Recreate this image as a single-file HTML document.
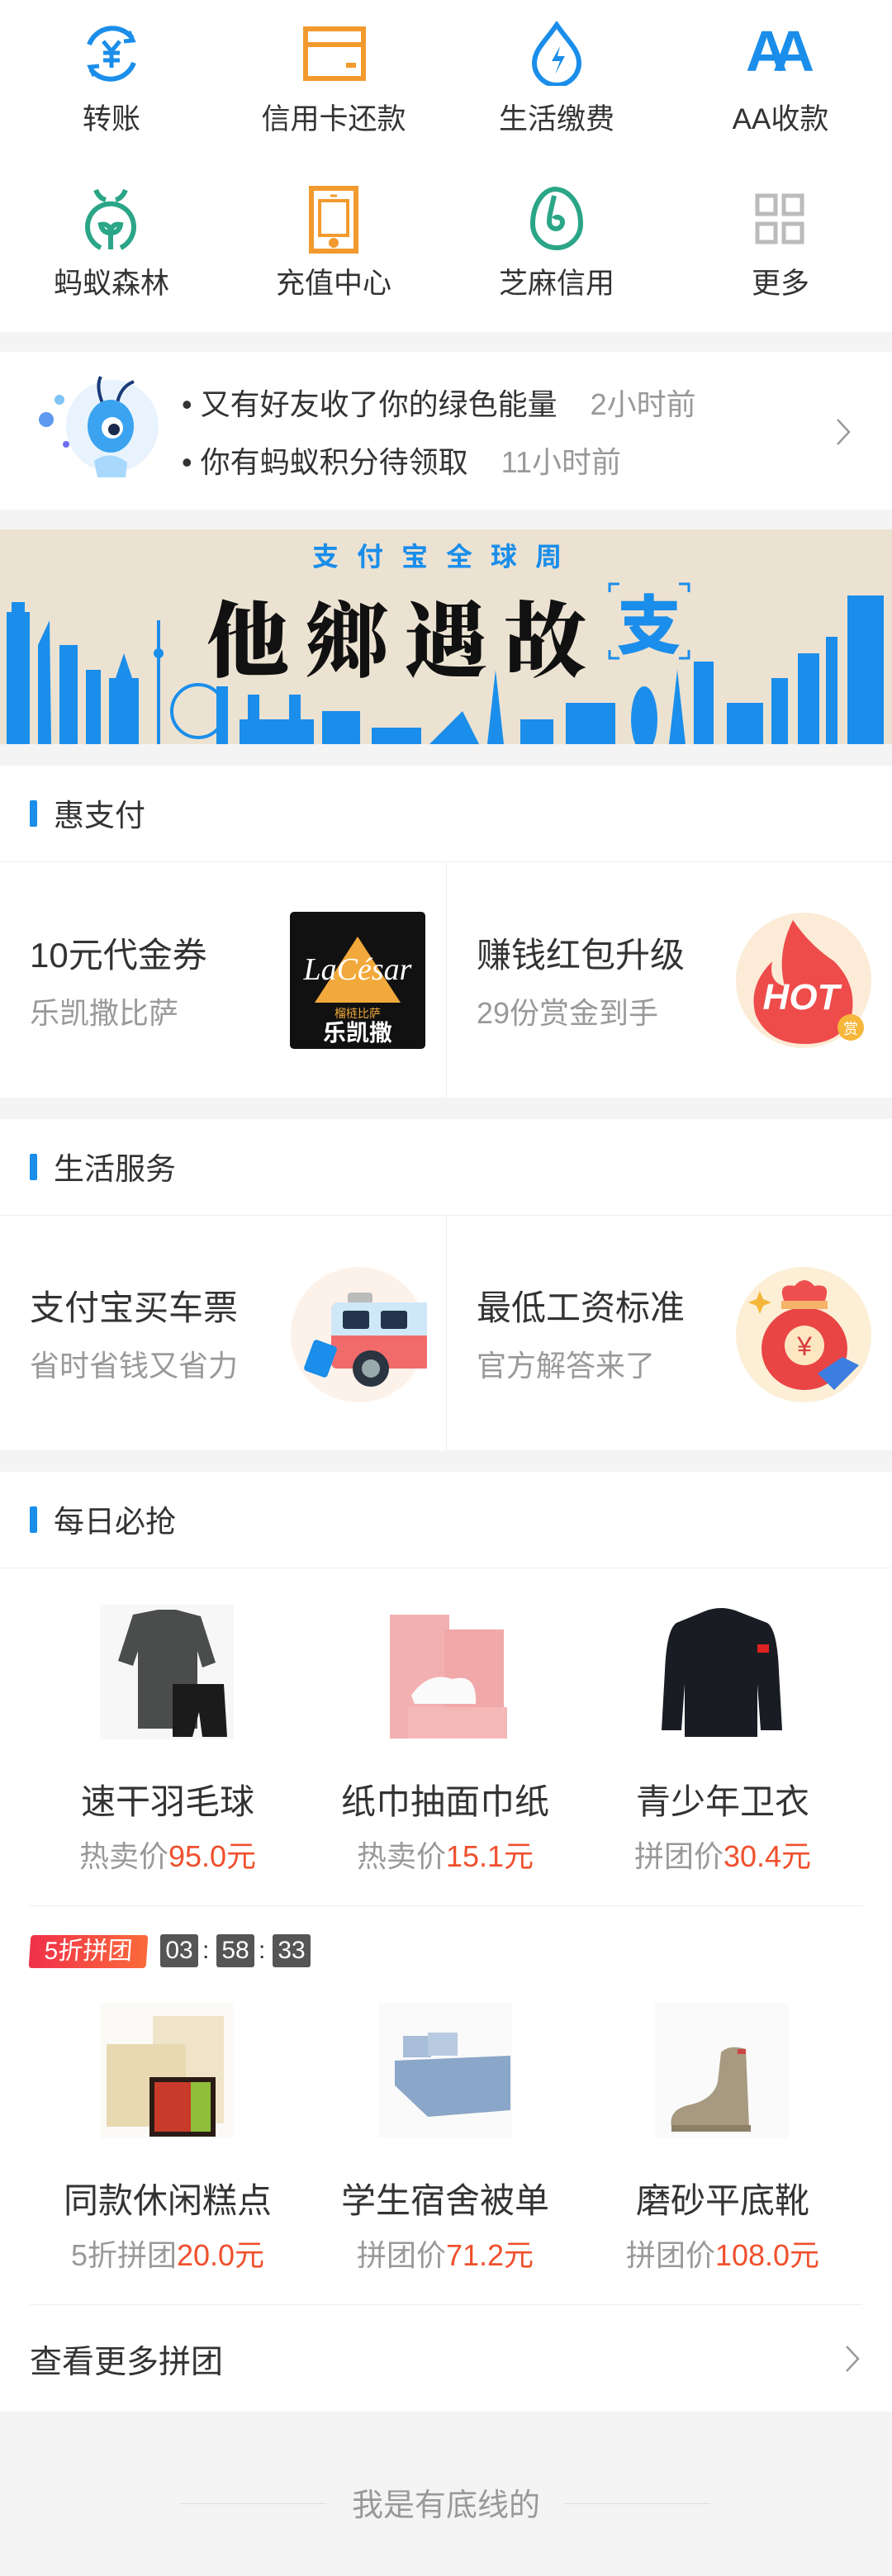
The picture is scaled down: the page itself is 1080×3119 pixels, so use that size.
<!DOCTYPE html>
<html><head><meta charset="utf-8"><style>
*{margin:0;padding:0;box-sizing:border-box}
body{width:1080px;height:3119px;background:#fff;font-family:"Liberation Sans","Noto Sans CJK SC",sans-serif;position:relative;overflow:hidden;color:#333}
.a{position:absolute}
.gray{position:absolute;left:0;width:1080px;background:#f4f4f4}
.lbl{position:absolute;width:270px;text-align:center;font-size:35px;color:#333;line-height:40px;margin-top:4px}
.ic{position:absolute}
.hd{position:absolute;left:0;width:1080px;height:117px;border-bottom:1px solid #eee}
.hd i{position:absolute;left:36px;top:42px;width:9px;height:32px;background:#1a8eea;border-radius:2px}
.hd span{position:absolute;left:65px;top:41px;font-size:37px;line-height:40px;color:#333}
.ct{position:absolute;font-size:42px;line-height:46px;color:#333;margin-top:3px}
.cs{position:absolute;font-size:36px;line-height:40px;color:#999;margin-top:3px}
.pn{position:absolute;width:336px;text-align:center;font-size:42px;line-height:46px;color:#333;margin-top:3px}
.pp{position:absolute;width:336px;text-align:center;font-size:36px;line-height:40px;color:#999;margin-top:3px}
.pp b{font-weight:normal;color:#f0502d}
.tb{position:absolute;top:2342px;width:46px;height:40px;background:#555;color:#fff;font-size:30px;line-height:40px;text-align:center;border-radius:3px}
.col{position:absolute;top:2342px;font-size:30px;line-height:40px;color:#333}
</style></head><body>

<svg class="ic" style="left:98px;top:28px" width="74" height="74" viewBox="0 0 74 74" fill="none" stroke="#1a8eea" stroke-width="6">
<path d="M10 26 A30 30 0 0 1 62 18"/><path d="M64 48 A30 30 0 0 1 12 56"/>
<path d="M58 10 L63 21 L52 22" stroke-width="5"/><path d="M16 64 L11 53 L22 52" stroke-width="5"/>
<path d="M27 22 L37 34 L47 22 M37 34 V54 M27 36 H47 M27 45 H47" stroke-width="5"/></svg>
<div class="lbl" style="left:0;top:121px">转账</div>

<svg class="ic" style="left:367px;top:32px" width="76" height="66" viewBox="0 0 76 66" fill="none" stroke="#f29a2e" stroke-width="6">
<rect x="3" y="3" width="70" height="60"/><path d="M3 22 H73"/><rect x="52" y="44" width="12" height="6" fill="#f29a2e" stroke="none"/></svg>
<div class="lbl" style="left:269px;top:121px">信用卡还款</div>

<svg class="ic" style="left:642px;top:26px" width="64" height="78" viewBox="0 0 64 78" fill="none" stroke="#1a8eea" stroke-width="6">
<path d="M32 4 C20 22 5 34 5 50 A27 27 0 0 0 59 50 C59 34 44 22 32 4Z"/><path d="M36 30 L26 48 H36 L30 64 L42 42 H33 Z" fill="#1a8eea" stroke="none"/></svg>
<div class="lbl" style="left:539px;top:121px">生活缴费</div>

<div class="a" style="left:903px;top:26px;font-size:70px;line-height:72px;font-weight:bold;color:#1a8eea;letter-spacing:-18px;font-family:'Liberation Sans',sans-serif">AA</div>
<div class="lbl" style="left:810px;top:121px">AA收款</div>

<svg class="ic" style="left:102px;top:226px" width="64" height="80" viewBox="0 0 64 80" fill="none" stroke="#2aa587" stroke-width="6">
<path d="M14 4 Q18 14 26 16 M50 4 Q46 14 38 16"/><path d="M20 74 A28 28 0 1 1 44 74"/><path d="M32 76 V50 M32 56 Q22 56 20 46 Q30 44 32 54 Q34 44 44 46 Q42 56 32 56"/></svg>
<div class="lbl" style="left:0;top:320px">蚂蚁森林</div>

<svg class="ic" style="left:374px;top:225px" width="60" height="82" viewBox="0 0 60 82" fill="none" stroke="#f29a2e" stroke-width="6">
<rect x="3" y="3" width="54" height="76"/><rect x="13" y="18" width="34" height="42" stroke-width="4"/><circle cx="30" cy="69" r="3" fill="#f29a2e"/><path d="M26 12 H34" stroke-width="3"/></svg>
<div class="lbl" style="left:269px;top:320px">充值中心</div>

<svg class="ic" style="left:641px;top:225px" width="66" height="82" viewBox="0 0 66 82" fill="none" stroke="#2aa587" stroke-width="6">
<path d="M30 4 C14 6 4 26 4 46 A29 29 0 0 0 62 46 C62 22 48 4 30 4Z"/><path d="M30 12 C26 30 24 36 24 44 A8 8 0 0 0 40 44 C40 38 32 36 30 40"/></svg>
<div class="lbl" style="left:539px;top:320px">芝麻信用</div>

<svg class="ic" style="left:914px;top:234px" width="60" height="62" viewBox="0 0 60 62" fill="none" stroke="#bbb" stroke-width="5">
<rect x="3" y="3" width="22" height="22"/><rect x="35" y="3" width="22" height="22"/><rect x="3" y="37" width="22" height="22"/><rect x="35" y="37" width="22" height="22"/></svg>
<div class="lbl" style="left:810px;top:320px">更多</div>

<div class="gray" style="top:402px;height:24px"></div>

<svg class="a" style="left:44px;top:448px" width="150" height="130" viewBox="0 0 150 130">
<circle cx="92" cy="68" r="56" fill="#e8f3fd"/>
<circle cx="12" cy="60" r="9" fill="#5d9af0"/><circle cx="28" cy="36" r="6" fill="#7fc4f5"/><circle cx="36" cy="90" r="4" fill="#6a6ff0"/>
<path d="M80 40 Q72 20 78 8 M98 40 Q102 20 118 14" stroke="#1a3b7a" stroke-width="4" fill="none"/>
<ellipse cx="90" cy="68" rx="28" ry="32" fill="#3ba3f0"/><circle cx="92" cy="70" r="13" fill="#fff"/><circle cx="94" cy="72" r="7" fill="#1a2a4a"/>
<path d="M70 110 Q90 96 110 112 L108 130 H74Z" fill="#a8d8fb"/></svg>
<div class="a" style="left:220px;top:469px;font-size:36px;line-height:42px;color:#333">•&nbsp;又有好友收了你的绿色能量 <span style="color:#999;margin-left:30px">2小时前</span></div>
<div class="a" style="left:220px;top:539px;font-size:36px;line-height:42px;color:#333">•&nbsp;你有蚂蚁积分待领取 <span style="color:#999;margin-left:30px">11小时前</span></div>
<svg class="a" style="left:1011px;top:505px" width="20" height="36" viewBox="0 0 20 36" fill="none" stroke="#999" stroke-width="2.5"><path d="M3 3 L17 18 L3 33"/></svg>

<div class="gray" style="top:617px;height:24px"></div>

<svg class="a" style="left:0;top:641px" width="1080" height="260" viewBox="0 0 1080 260">
<rect width="1080" height="260" fill="#ece2d2"/>
<text x="540" y="44" text-anchor="middle" font-family="Noto Sans CJK SC,sans-serif" font-weight="bold" font-size="32" fill="#1a8eea" letter-spacing="22">支付宝全球周</text>
<text x="250" y="170" font-family="Noto Serif CJK SC,serif" font-weight="900" font-size="100" fill="#111" letter-spacing="20">他鄉遇故</text>
<path d="M738 76 V66 H750 M822 66 H834 V76 M738 146 V156 H750 M822 156 H834 V146" stroke="#1a8eea" stroke-width="3" fill="none"/>
<text x="786" y="144" text-anchor="middle" font-family="Noto Sans CJK SC,sans-serif" font-weight="900" font-size="78" fill="#1a8eea">支</text>
<g fill="#1a8eea">
<rect x="8" y="100" width="28" height="160"/><rect x="14" y="88" width="16" height="14"/>
<polygon points="46,260 46,140 60,110 62,260"/><rect x="72" y="140" width="22" height="120"/><rect x="104" y="170" width="18" height="90"/>
<rect x="132" y="180" width="36" height="80"/><polygon points="140,180 150,150 160,180"/><rect x="190" y="110" width="4" height="150"/><circle cx="192" cy="150" r="6"/>
<circle cx="240" cy="220" r="32" fill="none" stroke="#1a8eea" stroke-width="4"/><rect x="262" y="190" width="14" height="70"/>
<rect x="290" y="230" width="90" height="30"/><rect x="300" y="200" width="14" height="60"/><rect x="350" y="200" width="14" height="60"/>
<rect x="390" y="220" width="46" height="40"/><rect x="450" y="240" width="60" height="20"/><polygon points="520,260 560,220 580,260"/>
<polygon points="590,260 600,170 610,260"/><rect x="630" y="230" width="40" height="30"/><rect x="685" y="210" width="60" height="50"/>
<ellipse cx="780" cy="230" rx="16" ry="40"/><polygon points="810,260 820,170 830,260"/><rect x="840" y="160" width="24" height="100"/>
<rect x="880" y="210" width="44" height="50"/><rect x="934" y="180" width="20" height="80"/><rect x="966" y="150" width="26" height="110"/>
<rect x="1000" y="130" width="14" height="130"/><rect x="1026" y="80" width="44" height="180"/>
</g></svg>

<div class="gray" style="top:901px;height:26px"></div>

<div class="hd" style="top:927px"><i></i><span>惠支付</span></div>
<div class="a" style="left:540px;top:1044px;width:1px;height:285px;background:#eee"></div>
<div class="ct" style="left:36px;top:1131px">10元代金券</div>
<div class="cs" style="left:36px;top:1204px">乐凯撒比萨</div>
<div class="a" style="left:351px;top:1104px;width:164px;height:166px;background:#111;border-radius:5px;overflow:hidden">
<svg width="164" height="166" viewBox="0 0 164 166"><polygon points="82,30 134,110 30,110" fill="#f2a93b"/>
<text x="82" y="82" text-anchor="middle" font-family="Liberation Serif,serif" font-style="italic" font-size="38" fill="#fff">LaCésar</text>
<text x="82" y="128" text-anchor="middle" font-size="14" fill="#f2a93b" font-family="Noto Sans CJK SC,sans-serif">榴梿比萨</text>
<text x="82" y="156" text-anchor="middle" font-size="28" font-weight="bold" fill="#fff" font-family="Noto Sans CJK SC,sans-serif">乐凯撒</text></svg></div>
<div class="ct" style="left:577px;top:1131px">赚钱红包升级</div>
<div class="cs" style="left:577px;top:1204px">29份赏金到手</div>
<svg class="a" style="left:890px;top:1104px" width="166" height="166" viewBox="0 0 166 166">
<circle cx="83" cy="83" r="82" fill="#fcebd6"/>
<path d="M70 10 Q90 40 120 60 Q150 90 140 130 Q125 160 85 160 Q40 160 25 125 Q15 90 45 60 Q40 85 60 90 Q50 50 70 10Z" fill="#ee4b4b"/>
<text x="80" y="118" text-anchor="middle" font-family="Liberation Sans,sans-serif" font-weight="bold" font-style="italic" font-size="44" fill="#fff">HOT</text>
<circle cx="140" cy="140" r="16" fill="#f6b63a"/><text x="140" y="148" text-anchor="middle" font-size="18" fill="#fff" font-family="Noto Sans CJK SC,sans-serif">赏</text></svg>

<div class="gray" style="top:1329px;height:26px"></div>

<div class="hd" style="top:1355px"><i></i><span>生活服务</span></div>
<div class="a" style="left:540px;top:1472px;width:1px;height:284px;background:#eee"></div>
<div class="ct" style="left:36px;top:1558px">支付宝买车票</div>
<div class="cs" style="left:36px;top:1631px">省时省钱又省力</div>
<svg class="a" style="left:351px;top:1533px" width="166" height="166" viewBox="0 0 166 166">
<circle cx="83" cy="83" r="82" fill="#fdf2ea"/>
<rect x="70" y="32" width="30" height="14" rx="4" fill="#bbb"/>
<path d="M60 44 H166 V124 H56 Q50 124 50 114 V54 Q50 44 60 44Z" fill="#f26b6b"/>
<path d="M60 44 H166 V84 H50 V54 Q50 44 60 44Z" fill="#cfe8f8"/>
<rect x="64" y="54" width="32" height="22" rx="3" fill="#23344d"/><rect x="110" y="54" width="32" height="22" rx="3" fill="#23344d"/>
<circle cx="98" cy="124" r="22" fill="#2b3441"/><circle cx="98" cy="124" r="11" fill="#9aa"/>
<rect x="22" y="92" width="30" height="40" rx="4" transform="rotate(20 37 112)" fill="#1a8eea"/></svg>
<div class="ct" style="left:577px;top:1558px">最低工资标准</div>
<div class="cs" style="left:577px;top:1631px">官方解答来了</div>
<svg class="a" style="left:890px;top:1533px" width="166" height="166" viewBox="0 0 166 166">
<circle cx="83" cy="83" r="82" fill="#fcefd6"/>
<path d="M60 44 Q50 20 72 24 Q84 10 96 24 Q118 20 108 44Z" fill="#ee5050"/>
<ellipse cx="84" cy="100" rx="52" ry="50" fill="#e94545"/><rect x="56" y="42" width="56" height="10" fill="#f6b36a"/>
<circle cx="84" cy="96" r="24" fill="#fde7c2"/><text x="84" y="108" text-anchor="middle" font-size="32" fill="#d83c3c" font-family="Liberation Sans,sans-serif">¥</text>
<path d="M100 130 L130 110 L150 120 L120 150Z" fill="#3b7de0"/><polygon points="30,30 34,40 44,44 34,48 30,58 26,48 16,44 26,40" fill="#f6b63a"/></svg>

<div class="gray" style="top:1756px;height:26px"></div>

<div class="hd" style="top:1782px"><i></i><span>每日必抢</span></div>

<svg class="a" style="left:121px;top:1943px" width="162" height="163" viewBox="0 0 162 163">
<rect width="162" height="163" fill="#f7f7f7"/><path d="M40 12 L70 6 H92 L122 14 L140 70 L124 76 L118 56 V150 H46 V56 L40 74 L22 68Z" fill="#4a4d4c"/>
<path d="M88 96 H150 L154 160 H124 L120 130 L112 160 H88Z" fill="#1b1b1b"/></svg>
<svg class="a" style="left:458px;top:1943px" width="162" height="163" viewBox="0 0 162 163">
<rect width="162" height="163" fill="#fff"/><rect x="14" y="12" width="72" height="150" fill="#f2b1b0"/><rect x="80" y="30" width="72" height="132" fill="#f0a8a8"/>
<rect x="36" y="124" width="120" height="38" fill="#f4b8b6"/><path d="M40 110 Q60 80 90 90 Q120 82 118 120 H44Z" fill="#fafafa"/></svg>
<svg class="a" style="left:793px;top:1943px" width="162" height="163" viewBox="0 0 162 163">
<rect width="162" height="163" fill="#fff"/><path d="M60 8 Q80 0 100 8 L136 22 Q148 30 150 80 L154 152 H128 L124 96 V160 H36 V96 L32 152 H8 L12 80 Q14 30 26 22Z" fill="#1a1c24"/>
<rect x="124" y="48" width="14" height="10" fill="#d22"/></svg>

<div class="pn" style="left:35px;top:2156px">速干羽毛球</div>
<div class="pp" style="left:35px;top:2225px">热卖价<b>95.0元</b></div>
<div class="pn" style="left:371px;top:2156px">纸巾抽面巾纸</div>
<div class="pp" style="left:371px;top:2225px">热卖价<b>15.1元</b></div>
<div class="pn" style="left:707px;top:2156px">青少年卫衣</div>
<div class="pp" style="left:707px;top:2225px">拼团价<b>30.4元</b></div>

<div class="a" style="left:36px;top:2307px;width:1008px;height:1px;background:#eee"></div>

<div class="a" style="left:36px;top:2343px;width:142px;height:40px;background:linear-gradient(90deg,#f0304a,#fb6a3a);color:#fff;font-size:30px;line-height:40px;text-align:center;border-radius:4px;transform:skewX(-4deg)">5折拼团</div>
<div class="tb" style="left:194px">03</div><div class="col" style="left:245px">:</div>
<div class="tb" style="left:262px">58</div><div class="col" style="left:313px">:</div>
<div class="tb" style="left:330px">33</div>

<svg class="a" style="left:121px;top:2425px" width="162" height="164" viewBox="0 0 162 164">
<rect width="162" height="164" fill="#fbfaf6"/><rect x="64" y="16" width="86" height="130" fill="#efe4c8"/><rect x="8" y="50" width="96" height="100" fill="#e8d9b3"/>
<rect x="60" y="90" width="80" height="72" fill="#2a1b14"/><rect x="66" y="96" width="68" height="60" fill="#c83a2a"/><rect x="110" y="96" width="24" height="60" fill="#8fbf3a"/></svg>
<svg class="a" style="left:458px;top:2425px" width="162" height="164" viewBox="0 0 162 164">
<rect width="162" height="164" fill="#fafafa"/><path d="M20 70 L160 64 V130 L60 138 L20 100Z" fill="#8aa6c8"/><rect x="30" y="40" width="34" height="26" fill="#a7bdd8"/><rect x="60" y="36" width="36" height="28" fill="#b8cae0"/></svg>
<svg class="a" style="left:793px;top:2425px" width="162" height="164" viewBox="0 0 162 164">
<rect width="162" height="164" fill="#fafafa"/><path d="M80 60 Q90 50 110 56 L114 150 H20 Q16 130 40 124 Q70 118 76 96Z" fill="#a89a80"/><rect x="20" y="148" width="96" height="8" fill="#8c7f66"/><rect x="100" y="56" width="10" height="6" fill="#c44"/></svg>

<div class="pn" style="left:35px;top:2639px">同款休闲糕点</div>
<div class="pp" style="left:35px;top:2708px">5折拼团<b>20.0元</b></div>
<div class="pn" style="left:371px;top:2639px">学生宿舍被单</div>
<div class="pp" style="left:371px;top:2708px">拼团价<b>71.2元</b></div>
<div class="pn" style="left:707px;top:2639px">磨砂平底靴</div>
<div class="pp" style="left:707px;top:2708px">拼团价<b>108.0元</b></div>

<div class="a" style="left:36px;top:2790px;width:1008px;height:1px;background:#eee"></div>
<div class="a" style="left:36px;top:2840px;font-size:39px;line-height:42px;color:#333">查看更多拼团</div>
<svg class="a" style="left:1022px;top:2838px" width="20" height="36" viewBox="0 0 20 36" fill="none" stroke="#999" stroke-width="2.5"><path d="M3 3 L17 18 L3 33"/></svg>

<div class="gray" style="top:2920px;height:199px"></div>
<div class="a" style="left:219px;top:3031px;width:176px;height:1px;background:#ddd"></div>
<div class="a" style="left:682px;top:3031px;width:178px;height:1px;background:#ddd"></div>
<div class="a" style="left:400px;top:3013px;width:280px;text-align:center;font-size:38px;line-height:42px;color:#999">我是有底线的</div>
</body></html>
